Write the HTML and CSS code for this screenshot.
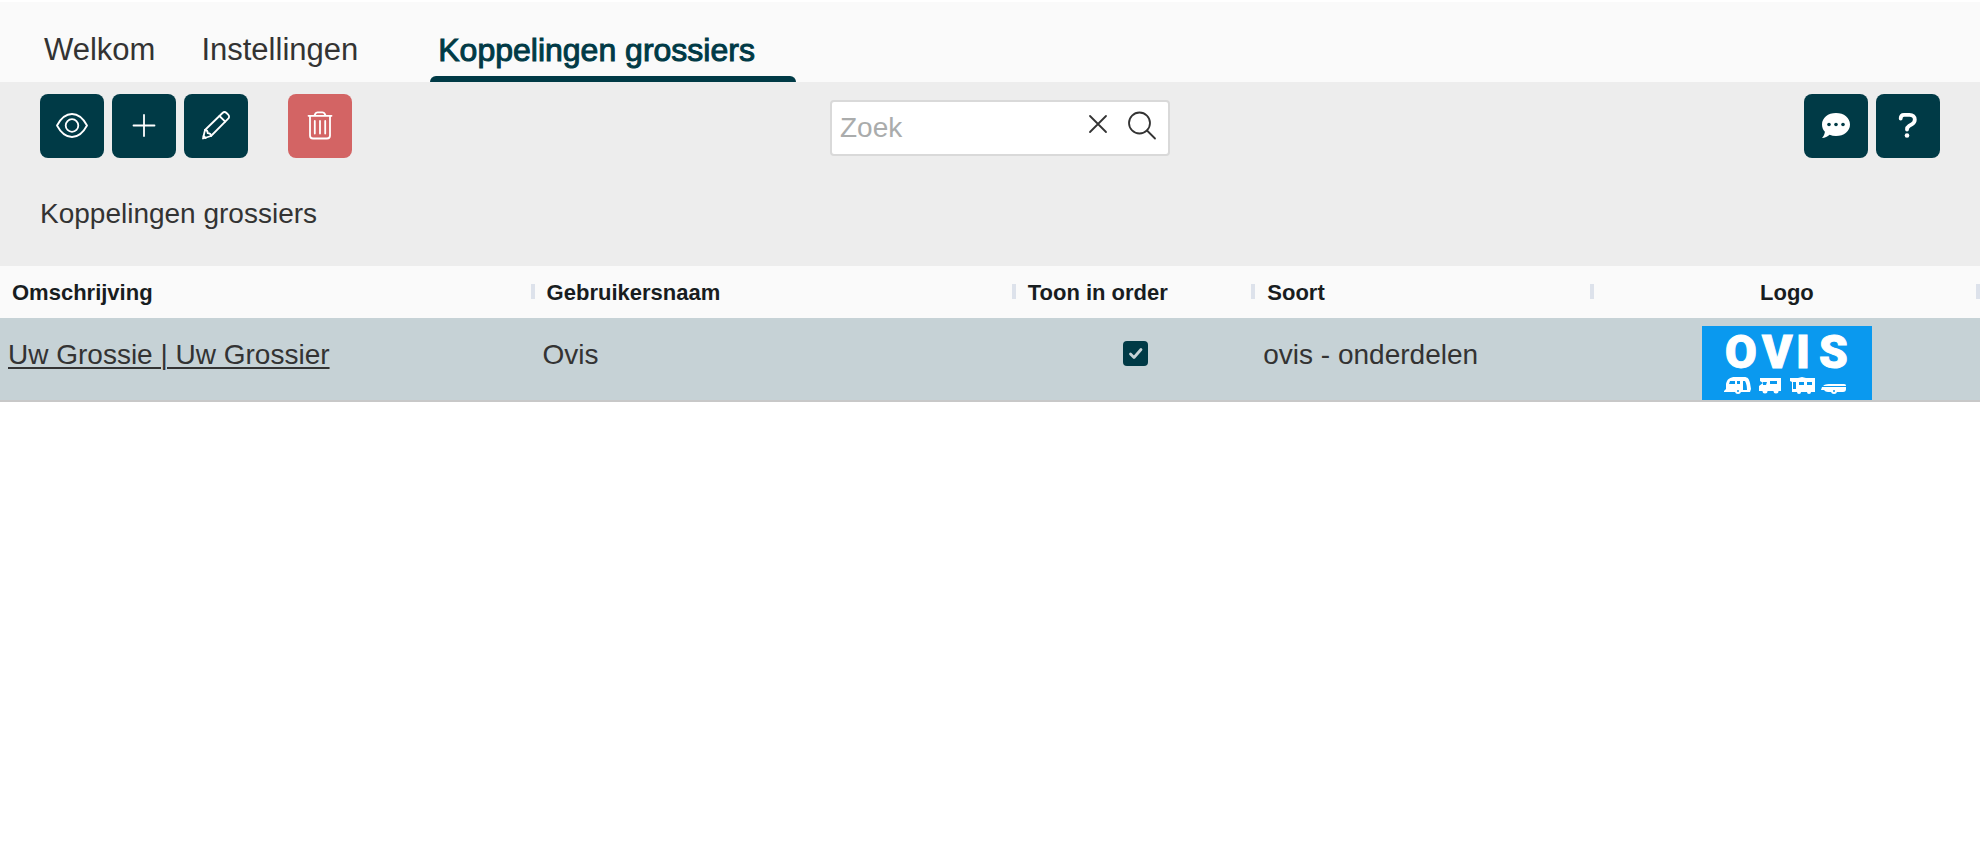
FILE: index.html
```html
<!DOCTYPE html>
<html lang="nl">
<head>
  <meta charset="UTF-8">
  <meta name="viewport" content="width=device-width, initial-scale=1.0">
  <title>Koppelingen grossiers</title>
  <link rel="stylesheet" href="styles.css">
</head>
<body>
  <nav class="tabs">
    <a href="#" class="tab">Welkom</a>
    <a href="#" class="tab">Instellingen</a>
    <a href="#" class="tab active" aria-current="page">Koppelingen grossiers</a>
  </nav>

  <header class="page-head">
    <div class="toolbar">
      <div class="btn-group">
        <button type="button" class="btn" aria-label="Bekijken">
          <svg class="icon" viewBox="0 0 32 32">
            <path d="M1 15.500C5 8 10 4 16 4s11 4 15 11.500C27 23 22 27 16 27S5 23 1 15.500z"/>
            <circle cx="16" cy="15.500" r="6.300"/>
          </svg>
        </button>
        <button type="button" class="btn" aria-label="Toevoegen">
          <svg class="icon" viewBox="0 0 32 32">
            <path d="M16 5v21M5.500 15.500h21"/>
          </svg>
        </button>
        <button type="button" class="btn" aria-label="Bewerken">
          <svg class="icon" viewBox="0 0 32 32">
            <path d="M3 28.500l2-8.500L22.500 3c1.200-1.200 2.800-1.200 4 0l1.700 1.700c1.200 1.200 1.200 2.800 0 4L11 26z"/>
            <path d="M19.500 6l5.700 5.700M5 20c2 0 2.700.8 2.700 3.200 2.300 0 3.300.8 3.300 2.800M3.500 26l2.300 2"/>
          </svg>
        </button>
        <button type="button" class="btn btn-delete" aria-label="Verwijderen">
          <svg class="icon" viewBox="0 0 32 32">
            <path d="M4.500 5.800h23M6 6v19.500c0 2 1 3 3 3h14c2 0 3-1 3-3V6M10.500 5.500l1-2c.4-.8 1-1.200 2-1.200h5c1 0 1.600.4 2 1.200l1 2"/>
            <path d="M10.800 11v12.500M16 11v12.500M21.200 11v12.500"/>
          </svg>
        </button>
      </div>

      <form class="search">
        <input type="text" class="search-input" placeholder="Zoek" aria-label="Zoek">
        <button type="reset" class="search-btn" aria-label="Wissen">
          <svg class="icon" viewBox="0 0 32 32"><path d="M8 8l16 16M24 8L8 24"/></svg>
        </button>
        <button type="submit" class="search-btn" aria-label="Zoeken">
          <svg class="icon" viewBox="0 0 32 32"><circle cx="13.500" cy="15" r="10.500"/><path d="M21 22.500l8 8"/></svg>
        </button>
      </form>

      <div class="btn-group right">
        <button type="button" class="btn" aria-label="Chat">
          <svg class="icon" viewBox="0 0 32 32">
            <path class="fill" d="M16 3c8 0 14 4.800 14 11.500S24 26 16 26c-2.300 0-4.500-.4-6.400-1.200C7.500 26.800 5 28 2 28c1.800-2 2.700-4 2.900-6.200C3 19.800 2 17.300 2 14.500 2 7.800 8 3 16 3z"/>
            <circle class="dot" cx="9" cy="14.500" r="1.800"/>
            <circle class="dot" cx="16" cy="14.500" r="1.800"/>
            <circle class="dot" cx="23" cy="14.500" r="1.800"/>
          </svg>
        </button>
        <button type="button" class="btn" aria-label="Help">
          <svg class="icon" viewBox="0 0 32 32">
            <path class="thick" d="M8.700 8.500C8.700 6 10 4.800 12 4.800h5.500c3.300 0 5.300 2 5.300 4.700 0 2-.9 3.500-2.700 4.600l-3 1.800c-1.400.9-2.100 1.700-2.100 3.600"/>
            <circle class="fill" cx="15" cy="25.500" r="2.300"/>
          </svg>
        </button>
      </div>
    </div>
    <h1>Koppelingen grossiers</h1>
  </header>

  <table class="grid">
    <thead>
      <tr>
        <th class="col-name">Omschrijving</th>
        <th class="col-user">Gebruikersnaam</th>
        <th class="col-order">Toon in order</th>
        <th class="col-kind">Soort</th>
        <th class="col-logo">Logo</th>
      </tr>
    </thead>
    <tbody>
      <tr>
        <td><a href="#">Uw Grossie | Uw Grossier</a></td>
        <td>Ovis</td>
        <td class="center"><input type="checkbox" class="check" aria-label="Toon in order" checked></td>
        <td>ovis - onderdelen</td>
        <td class="logo-cell">
          <svg class="logo" viewBox="0 0 170 74" role="img" aria-label="Ovis">
            <rect width="170" height="74" fill="#0a99ef"/>
            <text class="logo-text" y="42" x="23 60 94 117">OVIS</text>
            <g fill="#fff">
              <!-- caravan -->
              <path d="M22 65l2-2V58c1-5 4-7 9-7h9c4 0 5 2 6 6l1 6-1 3H22z"/>
              <circle cx="36" cy="65" r="3"/>
              <!-- camper -->
              <path d="M58 52h21v13H57v-5l4-3-3-2z"/>
              <circle cx="63" cy="65" r="2.500"/>
              <circle cx="74" cy="65" r="2.500"/>
              <!-- stacaravan -->
              <path d="M88 52h8l4-1 4 1h9v14H90V56l-2-1z"/>
              <circle cx="97" cy="66" r="2"/>
              <circle cx="107" cy="66" r="2"/>
              <!-- vouwwagen -->
              <path d="M121 60c2-2 5-2 8-2h11c3 0 4 0 4 2zM120 61h24v2c0 2-1 3-3 3h-15c-2 0-3-1-4-2h-3z"/>
              <circle cx="132" cy="65" r="3"/>
            </g>
            <g fill="#0a99ef">
              <path d="M28 55h5v3h-6zM35 55h3v3h-3zM41 55h2c1 2 2 4 2 9h-4z"/>
              <path d="M61 56h4l-1 3h-3zM68 55h7v3h-7z"/>
              <path d="M91 56h3v7h-3zM97 56h5v3h-5zM105 56h5v3h-5z"/>
              <circle cx="36" cy="65" r="1"/>
              <circle cx="132" cy="65" r="1"/>
            </g>
          </svg>
        </td>
      </tr>
    </tbody>
  </table>
</body>
</html>
```
FILE: styles.css
```css
* {
  box-sizing: border-box;
}

body {
  margin: 0;
  padding-top: 2px;
  font-family: 'Liberation Sans', Arial, sans-serif;
  font-size: 28px;
  background-color: #fff;
  color: #333;
}

/* Tabs */
.tabs {
  display: flex;
  height: 80px;
  padding-left: 36px;
  background-color: #fafafa;
}

.tab {
  padding: 20px 38px 0 8px;
  font-size: 31px;
  line-height: 56px;
  color: #333;
  text-decoration: none;
}

.tab.active {
  position: relative;
  margin-left: 34px;
  padding-right: 41px;
  font-size: 32px;
  color: #003a46;
  -webkit-text-stroke: 1px #003a46;
}

.tab.active::after {
  content: '';
  position: absolute;
  left: 0;
  right: 0;
  bottom: 0;
  height: 6px;
  border-radius: 6px 6px 0 0;
  background-color: #003a46;
}

/* Toolbar */
.page-head {
  padding: 12px 40px 32px;
  background-color: #ededed;
}

.toolbar {
  display: grid;
  grid-template-columns: 1fr auto 1fr;
  align-items: center;
}

.btn-group {
  display: flex;
  gap: 8px;
}

.btn-group.right {
  justify-content: flex-end;
}

.btn {
  display: flex;
  align-items: center;
  justify-content: center;
  width: 64px;
  height: 64px;
  padding: 0;
  border: none;
  border-radius: 8px;
  background-color: #003a46;
  color: #fff;
  cursor: pointer;
}

.btn-delete {
  margin-left: 32px;
  background-color: #d36464;
}

.icon {
  display: block;
  width: 32px;
  height: 32px;
  fill: none;
  stroke: currentColor;
  stroke-width: 1.8;
  stroke-linecap: round;
  stroke-linejoin: round;
}

.icon .fill {
  fill: currentColor;
  stroke: none;
}

.icon .dot {
  fill: #003a46;
  stroke: none;
}

.icon .thick {
  stroke-width: 3.8;
}

.search {
  display: flex;
  align-items: center;
  width: 340px;
  height: 56px;
  margin-top: 4px;
  margin-left: 20px;
  padding: 0 4px 0 8px;
  border: 2px solid #d9d9d9;
  border-radius: 4px;
  background-color: #fff;
}

.search-input {
  flex: 1;
  min-width: 0;
  padding: 0;
  border: none;
  outline: none;
  background: none;
  font: inherit;
  color: #333;
}

.search-input::placeholder {
  color: #aaacac;
}

.search-btn {
  width: 44px;
  height: 40px;
  padding: 0 6px 8px;
  border: none;
  background: none;
  color: #333;
  cursor: pointer;
}

h1 {
  margin: 36px 0 0;
  font-size: 28px;
  line-height: 40px;
  font-weight: normal;
}

/* Table */
.grid {
  width: 100%;
  table-layout: fixed;
  border-spacing: 0;
}

.grid th {
  position: relative;
  height: 52px;
  padding: 2px 12px 0;
  background-color: #fafafa;
  color: #181d1f;
  font-size: 22px;
  text-align: left;
}

.grid th::after {
  content: '';
  position: absolute;
  top: 18px;
  right: 0;
  width: 4px;
  height: 15px;
  background-color: #dde2eb;
}

.col-name {
  width: 27%;
}

.col-user {
  width: 24.3%;
}

.col-order {
  width: 12.1%;
}

.col-kind {
  width: 17.1%;
}

.grid th.col-logo {
  text-align: center;
}

.grid td {
  height: 84px;
  padding: 17px 8px 0;
  border-bottom: 2px solid #c8c8c8;
  background-color: #c6d2d6;
  line-height: 40px;
  vertical-align: top;
}

.grid td a {
  color: #333;
  text-underline-offset: 3px;
  text-decoration-thickness: 2px;
}

.grid td.center {
  padding-top: 14px;
  text-align: center;
}

.check {
  appearance: none;
  width: 25px;
  height: 25px;
  margin: 0;
  border-radius: 4px;
  vertical-align: middle;
}

.check:checked {
  background: #003a46 url("data:image/svg+xml,%3Csvg xmlns='http://www.w3.org/2000/svg' viewBox='0 0 25 25'%3E%3Cpath d='M7.500 13l3.500 3.500 7-8' fill='none' stroke='%23c6d2d6' stroke-width='2.800' stroke-linecap='round' stroke-linejoin='round'/%3E%3C/svg%3E");
}

.grid td.logo-cell {
  padding: 8px 0 0;
  text-align: center;
}

.logo {
  display: block;
  width: 170px;
  height: 74px;
  margin: 0 auto;
}

.logo-text {
  font-family: Roboto, sans-serif;
  font-size: 46px;
  font-weight: 900;
  fill: #fff;
  stroke: #fff;
  stroke-width: 1px;
}
```
